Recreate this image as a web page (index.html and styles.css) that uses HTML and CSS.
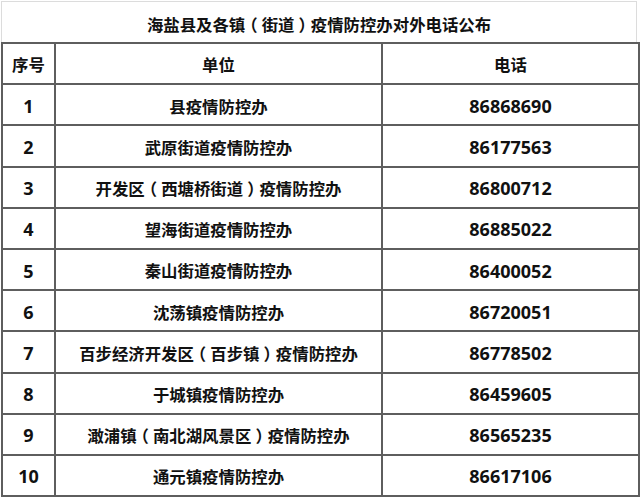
FILE: index.html
```html
<!DOCTYPE html>
<html lang="zh-CN">
<head>
<meta charset="utf-8">
<title>海盐县及各镇（街道）疫情防控办对外电话公布</title>
<link rel="stylesheet" href="styles.css">
</head>
<body>
<div class="sheet">
  <div class="title">海盐县及各镇<span class="br">（</span>街道<span class="br">）</span>疫情防控办对外电话公布</div>
  <table class="grid">
    <colgroup>
      <col class="c1"><col class="c2"><col class="c3">
    </colgroup>
    <thead>
      <tr><th class="txt">序号</th><th class="txt">单位</th><th class="txt">电话</th></tr>
    </thead>
    <tbody>
      <tr><td class="num">1</td><td class="txt">县疫情防控办</td><td class="num">86868690</td></tr>
      <tr><td class="num">2</td><td class="txt">武原街道疫情防控办</td><td class="num">86177563</td></tr>
      <tr><td class="num">3</td><td class="txt">开发区<span class="br">（</span>西塘桥街道<span class="br">）</span>疫情防控办</td><td class="num">86800712</td></tr>
      <tr><td class="num">4</td><td class="txt">望海街道疫情防控办</td><td class="num">86885022</td></tr>
      <tr><td class="num">5</td><td class="txt">秦山街道疫情防控办</td><td class="num">86400052</td></tr>
      <tr><td class="num">6</td><td class="txt">沈荡镇疫情防控办</td><td class="num">86720051</td></tr>
      <tr><td class="num">7</td><td class="txt">百步经济开发区<span class="br">（</span>百步镇<span class="br">）</span>疫情防控办</td><td class="num">86778502</td></tr>
      <tr><td class="num">8</td><td class="txt">于城镇疫情防控办</td><td class="num">86459605</td></tr>
      <tr><td class="num">9</td><td class="txt">澉浦镇<span class="br">（</span>南北湖风景区<span class="br">）</span>疫情防控办</td><td class="num">86565235</td></tr>
      <tr><td class="num">10</td><td class="txt">通元镇疫情防控办</td><td class="num">86617106</td></tr>
    </tbody>
  </table>
</div>
</body>
</html>
```
FILE: styles.css
```css
html, body {
  margin: 0;
  padding: 0;
  background: #ffffff;
}
.sheet {
  width: 640px;
  height: 498px;
  padding-left: 1px;
  box-sizing: border-box;
  overflow: hidden;
  color: #111;
}
.title {
  width: 636px;
  height: 41px;
  margin-top: 1px;
  box-sizing: border-box;
  border-top: 1px solid #dcdcdc;
  border-left: 1px solid #dcdcdc;
  border-right: 1px solid #dcdcdc;
  display: flex;
  align-items: center;
  justify-content: center;
  padding-top: 4px;
  font-family: "Noto Sans CJK SC", sans-serif;
  font-weight: bold;
  font-size: 16.4px;
  text-spacing-trim: space-all;
}
.br {
  font-feature-settings: "halt";
  padding: 0 0.25em;
}
.grid {
  border-collapse: collapse;
  table-layout: fixed;
  width: 637px;
}
.c1 { width: 53px; }
.c2 { width: 327px; }
.c3 { width: 257px; }
.grid th, .grid td {
  border: 2px solid #5e5e5e;
  height: 37.2px;
  padding: 2px 0 0 0;
  text-align: center;
  vertical-align: middle;
  font-weight: bold;
  line-height: 1;
}
.txt {
  font-family: "Noto Sans CJK SC", sans-serif;
  font-size: 16.4px;
  text-spacing-trim: space-all;
}
.num {
  font-family: "Noto Sans", "Noto Sans CJK SC", sans-serif;
  font-size: 18px;
}
```
